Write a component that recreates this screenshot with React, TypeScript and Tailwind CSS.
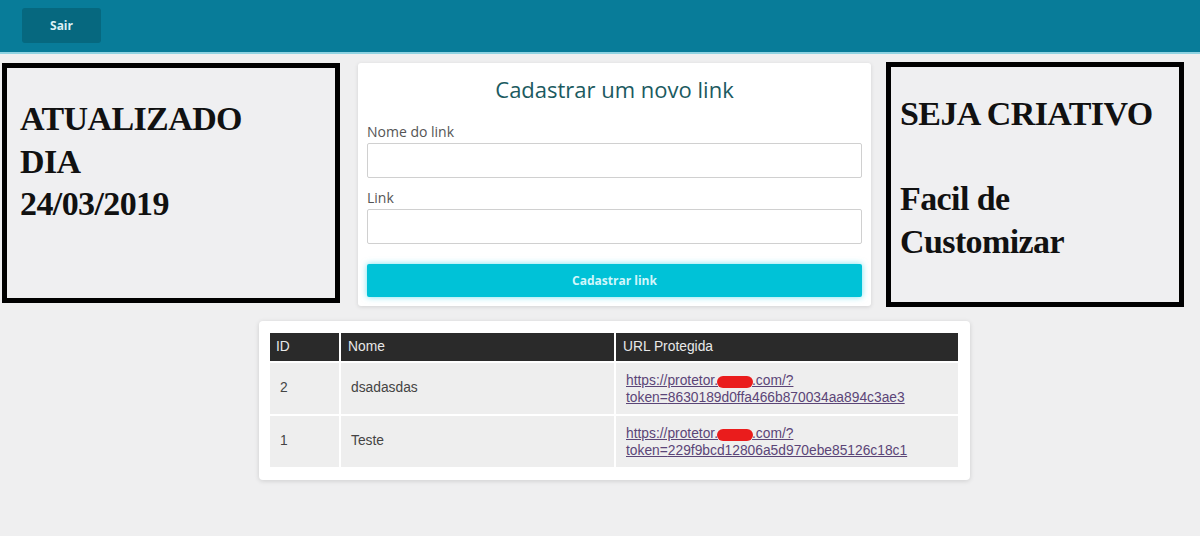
import React from "react";

const serif = { fontFamily: '"Liberation Serif", "Times New Roman", serif' };

function NoteBox({ className, lines }: { className: string; lines: string[] }) {
  return (
    <div
      className={`border-[5px] border-black bg-[#efeff1] text-[34px] font-bold leading-[42.5px] tracking-[-0.6px] text-[#111] ${className}`}
      style={serif}
    >
      {lines.map((l, i) => (
        <div key={i} className="h-[42.5px] whitespace-nowrap">
          {l}
        </div>
      ))}
    </div>
  );
}

function Field({ label }: { label: string }) {
  return (
    <div className="flex flex-col">
      <label className="text-[14px] leading-[20px] text-[#555]">{label}</label>
      <input
        type="text"
        className="mt-px h-[35px] w-full rounded-[2px] border border-[#d0d0d0] bg-white px-2 outline-none"
      />
    </div>
  );
}

function Masked() {
  return (
    <span className="mx-[-1px] inline-block h-[12px] w-[36px] translate-y-[1px] rounded-full bg-[#ea1c1c] align-middle" />
  );
}

const rows = [
  { id: "2", nome: "dsadasdas", token: "8630189d0ffa466b870034aa894c3ae3" },
  { id: "1", nome: "Teste", token: "229f9bcd12806a5d970ebe85126c18c1" },
];

export default function App() {
  return (
    <div
      className="min-h-[536px] w-[1200px] bg-[#efeff0]"
      style={{ fontFamily: '"Open Sans", "Liberation Sans", sans-serif' }}
    >
      <header className="flex h-[54px] items-start border-b-2 border-[#8fd3e2] bg-[#087c99] pl-[22px] pt-[8px]">
        <button className="h-[35px] w-[79px] rounded-[3px] bg-[#06687f] pt-px text-[12px] font-bold text-[#dcf0f5]">
          Sair
        </button>
      </header>

      <div className="flex items-start pt-[9px]">
        <NoteBox
          className="ml-[2px] h-[240px] w-[338px] pl-[13px] pt-[30px]"
          lines={["ATUALIZADO", "DIA", "24/03/2019"]}
        />

        <div className="ml-[18px] flex h-[243px] w-[513px] flex-col rounded-[3px] bg-white px-[9px] pt-[11px] shadow-[0_1px_4px_rgba(0,0,0,0.12)]">
          <h1 className="text-center text-[22px] leading-[30px] text-[#1b5a60]">
            Cadastrar um novo link
          </h1>
          <div className="mt-[18px] flex flex-col gap-[10px]">
            <Field label="Nome do link" />
            <Field label="Link" />
          </div>
          <button className="mt-[20px] h-[33px] w-full rounded-[2px] bg-[#00c2d7] text-[12px] font-bold text-[#d2f6fb] shadow-[0_0_6px_rgba(0,200,225,0.55)]">
            Cadastrar link
          </button>
        </div>

        <NoteBox
          className="ml-[15px] mt-[-1px] h-[245px] w-[298px] pl-[9px] pt-[26px]"
          lines={["SEJA CRIATIVO", "", "Facil de", "Customizar"]}
        />
      </div>

      <div
        className="ml-[259px] mt-[14px] w-[711px] rounded-[4px] bg-white px-[11px] pb-[13px] pt-[12px] shadow-[0_1px_5px_rgba(0,0,0,0.14)]"
        style={{ fontFamily: '"Liberation Sans", Arial, sans-serif' }}
      >
        <div className="grid grid-cols-[69px_273px_342px] gap-[2px] text-[13.8px]">
          <div className="flex h-[28px] items-center bg-[#2a2a2a] pl-[6px] text-[#e8e8e8]">ID</div>
          <div className="flex h-[28px] items-center bg-[#2a2a2a] pl-[7px] text-[#e8e8e8]">Nome</div>
          <div className="flex h-[28px] items-center bg-[#2a2a2a] pl-[7px] text-[#e8e8e8]">URL Protegida</div>
          {rows.map((r) => (
            <React.Fragment key={r.id}>
              <div className="flex h-[51px] items-center bg-[#eeeeee] pl-[10px] text-[#444]">{r.id}</div>
              <div className="flex h-[51px] items-center bg-[#eeeeee] pl-[10px] text-[#444]">{r.nome}</div>
              <div className="flex h-[51px] items-center bg-[#eeeeee] pl-[10px]">
                <a href="#" className="leading-[17px] text-[#5b4577] underline">
                  https://protetor.
                  <Masked />
                  .com/?
                  <br />
                  token={r.token}
                </a>
              </div>
            </React.Fragment>
          ))}
        </div>
      </div>
    </div>
  );
}
